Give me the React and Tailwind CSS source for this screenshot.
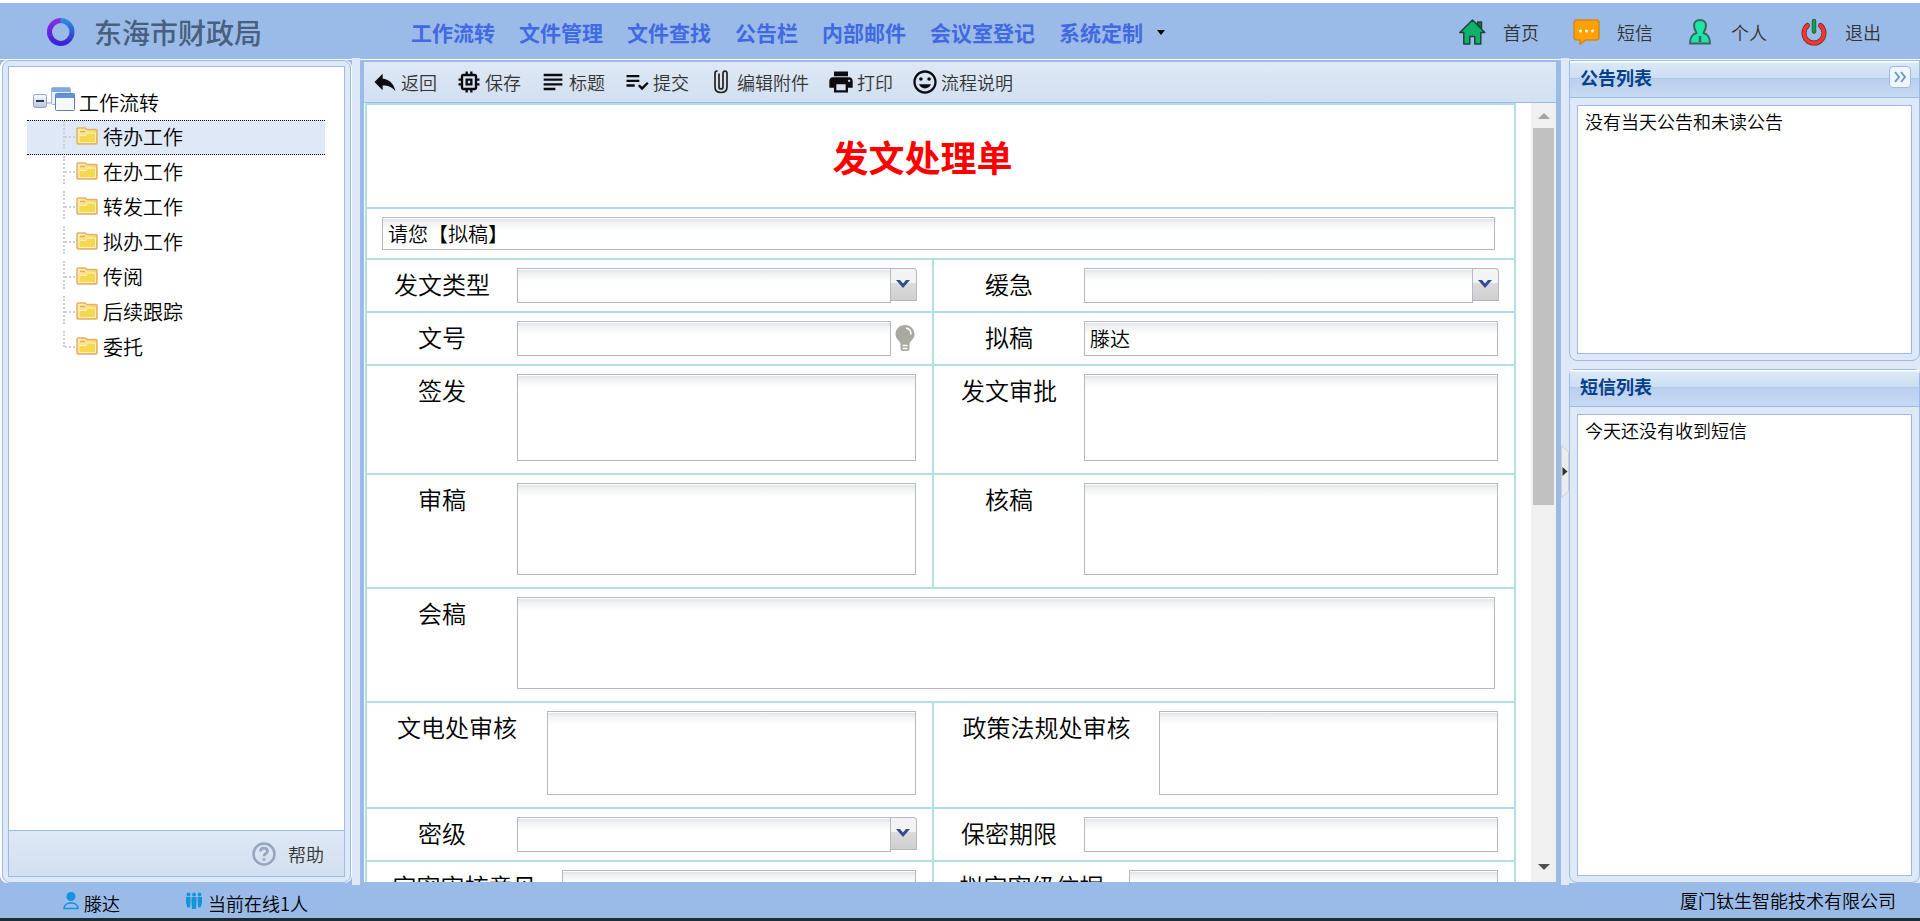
import { useState } from 'react';
import {
  MdReply,
  MdMemory,
  MdSubject,
  MdPlaylistAddCheck,
  MdPrint,
  MdInsertEmoticon,
} from 'react-icons/md';

const menuItems = ['工作流转', '文件管理', '文件查找', '公告栏', '内部邮件', '会议室登记', '系统定制'];

const treeItems = ['待办工作', '在办工作', '转发工作', '拟办工作', '传阅', '后续跟踪', '委托'];

const Logo = () => (
  <svg className="w-8 h-8" viewBox="0 0 32 32" fill="none" strokeWidth="5">
    <defs>
      <linearGradient id="ringLeft" x1="0" y1="0" x2="0" y2="1">
        <stop offset="0" stopColor="#8a2be2" />
        <stop offset="1" stopColor="#3b22d8" />
      </linearGradient>
      <linearGradient id="ringRight" x1="0" y1="0" x2="0" y2="1">
        <stop offset="0" stopColor="#2b8be0" />
        <stop offset="1" stopColor="#3a22d6" />
      </linearGradient>
    </defs>
    <path d="M15 4.500a11.500 11.500 0 0 0 0 23" stroke="url(#ringLeft)" />
    <path d="M14.500 4.500a11.500 11.500 0 0 1 0 23" stroke="url(#ringRight)" />
  </svg>
);

const HomeIcon = () => (
  <svg className="w-7 h-7" viewBox="0 0 28 28" stroke="#23443c" strokeWidth="1.5" strokeLinejoin="round">
    <path d="M18.500 4h4v6l-4-3z" fill="#0a7a4c" />
    <path d="M13.500 2 .8 14.500h4V26h6v-7.500h5V26h6V14.500h4z" fill="#0db26b" />
  </svg>
);

const ChatIcon = () => (
  <svg className="w-7 h-7" viewBox="0 0 28 28">
    <path
      d="M4 2h19q3 0 3 3v14q0 3-3 3H13l-6 4v-4H4q-3 0-3-3V5q0-3 3-3z"
      fill="#ffa200"
      stroke="#cf8a1c"
      strokeWidth="1.5"
    />
    <g fill="#fff">
      <circle cx="7.500" cy="13" r="1.500" />
      <circle cx="13.500" cy="13" r="1.500" />
      <circle cx="19.500" cy="13" r="1.500" />
    </g>
  </svg>
);

const PersonIcon = () => (
  <svg className="w-7 h-7" viewBox="0 0 28 28" stroke="#3a6664" strokeWidth="2" strokeLinejoin="round">
    <path
      d="M13 2c3.500 0 6 2.200 6 5.500 0 3-1.500 5.500-2.500 7.500 4.500 1.500 6.500 4 6.500 10.500H3C3 19 5 16.500 9.500 15 8.500 13 7 10.500 7 7.500 7 4.200 9.500 2 13 2z"
      fill="#1ce6a4"
    />
    <path d="M13 18v6" strokeWidth="2.5" />
  </svg>
);

const PowerIcon = () => (
  <svg className="w-7 h-7" viewBox="0 0 28 28" fill="none" strokeLinecap="round">
    <path d="M6.500 7.500a10 10 0 1 0 13 0" stroke="#6b2a30" strokeWidth="5" />
    <path d="M6.500 7.500a10 10 0 1 0 13 0" stroke="#f5352e" strokeWidth="3.5" />
    <path d="M13 3v10.500" stroke="#1e6b3c" strokeWidth="4.5" />
    <path d="M13 3v10" stroke="#12a04c" strokeWidth="2.5" />
  </svg>
);

const ClipIcon = () => (
  <svg className="w-6 h-6" viewBox="0 0 24 24" fill="none" stroke="#222" strokeWidth="1.700" strokeLinecap="round">
    <path d="M8 1c-1.500 0-2 1-2 2.500V17c0 4 2.500 5.500 6 5.500s6-1.500 6-5.500V3.500C18 2 17.500 1 16 1s-2 1-2 2.500V17c0 1.500-.5 2-2 2s-2-.5-2-2V4" />
  </svg>
);

const FolderIcon = () => (
  <svg className="w-[22px] h-[18px] shrink-0" viewBox="0 0 22 18">
    <defs>
      <linearGradient id="folder" x1="0" y1="0" x2="1" y2="1">
        <stop offset="0" stopColor="#fff3c4" />
        <stop offset="1" stopColor="#eec325" />
      </linearGradient>
    </defs>
    <path d="M1 2q0-1 1-1h7l2 1.500h9q1 0 1 1V16q0 1-1 1H2q-1 0-1-1z" fill="url(#folder)" stroke="#e3b068" strokeWidth="1.5" />
    <path d="M3 8.500h7l1.500-2.500h8v9.500H3z" fill="#f6d850" stroke="#fdf1c0" />
    <path d="M4 4.500h5" stroke="#e2ab53" strokeWidth="1.5" />
  </svg>
);

const WindowsIcon = () => (
  <svg className="w-6 h-6" viewBox="0 0 24 24">
    <rect x=".5" y=".5" width="19" height="17" rx="1" fill="#e9f0fa" stroke="#9db7dc" />
    <path d="M1 1h18v4H1z" fill="#7fa8dc" />
    <rect x="4.500" y="6.500" width="19" height="17" rx="1" fill="#f5f9ff" stroke="#5c81b5" />
    <path d="M5 7h18v4H5z" fill="#5f93d6" />
  </svg>
);

const MinusIcon = () => (
  <svg className="w-3.5 h-3.5" viewBox="0 0 14 14">
    <defs>
      <linearGradient id="minus" x1="0" y1="0" x2="0" y2="1">
        <stop offset="0" stopColor="#fff" />
        <stop offset="1" stopColor="#b4c3d8" />
      </linearGradient>
    </defs>
    <rect x=".5" y=".5" width="13" height="13" rx="2" fill="url(#minus)" stroke="#8fa3bf" />
    <path d="M3 7h8" stroke="#1d3a66" strokeWidth="2" />
  </svg>
);

const HelpIcon = () => (
  <svg className="w-6 h-6" viewBox="0 0 24 24" fill="none" stroke="#97a5bd">
    <circle cx="12" cy="12" r="10.500" strokeWidth="2.5" />
    <path d="M8.500 9.500c0-4.500 7-4.500 7-.3 0 2.500-3.500 2.300-3.500 5" strokeWidth="2.8" />
    <path d="M12 16.200v2.600" strokeWidth="2.8" />
  </svg>
);

const BulbIcon = () => (
  <svg className="w-[22px] h-[28px]" viewBox="0 0 22 28">
    <path
      d="M11 0c5.500 0 9.500 4 9.500 9.500 0 4.500-4.500 6-5 9.500v4.500q0 2.500-2 2.500h-5q-2 0-2-2.500V19c-.5-3.500-5-5-5-9.500C1.500 4 5.500 0 11 0z"
      fill="#aaa9a0"
    />
    <path d="M12 3c3 .5 5 3 5 6.500" fill="none" stroke="#fff" strokeWidth="1.5" />
    <path d="M8.500 20.500h5M8.500 23.500h5" stroke="#fff" strokeWidth="1.5" />
  </svg>
);

const UserIcon = () => (
  <svg className="w-[18px] h-[18px]" viewBox="0 0 18 18" fill="#1296db">
    <circle cx="9" cy="4.500" r="4.500" />
    <path d="M2 16.500c0-7.500 14-7.500 14 0z" fill="none" stroke="#1296db" strokeWidth="1.600" />
  </svg>
);

const PeopleIcon = () => (
  <svg className="w-[18px] h-[18px]" viewBox="0 0 18 18" fill="#1296db">
    <circle cx="3.500" cy="2.500" r="1.900" />
    <circle cx="9" cy="2.500" r="2" />
    <circle cx="14.500" cy="2.500" r="1.900" />
    <path d="M1 5h4.500v6L5 15.500H2.500L1 11zM6.500 5h5v6L11 17H7l-.5-6zM12.500 5H17v6l-1.500 4.500H13z" />
  </svg>
);

const quickLinks = [
  { label: '首页', icon: HomeIcon },
  { label: '短信', icon: ChatIcon },
  { label: '个人', icon: PersonIcon },
  { label: '退出', icon: PowerIcon },
];

const tools = [
  { label: '返回', icon: MdReply },
  { label: '保存', icon: MdMemory },
  { label: '标题', icon: MdSubject },
  { label: '提交', icon: MdPlaylistAddCheck },
  { label: '编辑附件', icon: ClipIcon },
  { label: '打印', icon: MdPrint },
  { label: '流程说明', icon: MdInsertEmoticon },
];

const fieldClass =
  'block min-w-0 flex-1 border border-[#b5b8c8] px-[5px] text-xl outline-none resize-none rounded-none ' +
  'bg-white bg-[linear-gradient(to_bottom,#ffffff_1px,#e1e5e5_1px,#f1f4f4_5px,#ffffff_13px)]';

function Combo({ id }) {
  const open = (e) => e.currentTarget.previousSibling.showPicker();
  return (
    <div className="flex flex-1 items-start">
      <select id={id} className={`${fieldClass} h-[35px] appearance-none`} />
      <button
        type="button"
        aria-label="展开"
        onClick={open}
        className="-mr-px h-[33px] w-[26px] rounded-tr border border-l-0 border-[#b5b8c8] bg-[linear-gradient(to_bottom,#f3f3f3_45%,#dcdcdc_45%,#cfcfcf)] flex items-center justify-center"
      >
        <svg className="mr-0.5 mb-0.5 w-3.5 h-2.5" viewBox="0 0 14 10">
          <path d="M0 1h4l3 3.500L10 1h4L7 9z" fill="#2d4f8e" />
        </svg>
      </button>
    </div>
  );
}

// One label + control pair of the form
function Field({ id, label, labelWidth = 'w-[150px]', type = 'text', height = 'h-[35px]', value = '', wide }) {
  return (
    <div className={`flex pt-2 ${wide ? 'pr-[19px]' : 'pr-4'} ${type === 'area' ? 'pb-3' : 'pb-2'}`}>
      <label htmlFor={id} className={`${labelWidth} shrink-0 text-center text-2xl leading-8`}>
        {label}
      </label>
      {type === 'area' && <textarea id={id} className={`${fieldClass} ${height}`} />}
      {type === 'text' && <input id={id} defaultValue={value} className={`${fieldClass} ${height}`} />}
      {type === 'select' && <Combo id={id} />}
      {type === 'number' && (
        <>
          <input id={id} className={`${fieldClass} ${height}`} />
          <button type="button" aria-label="生成文号" className="w-[25px] h-[35px] flex items-center justify-end">
            <BulbIcon />
          </button>
        </>
      )}
    </div>
  );
}

function FormRow({ children }) {
  return (
    <div className="grid grid-cols-[567fr_580fr] border-b-2 border-[#b0e0e6] [&>*:first-child]:border-r-2 [&>*:first-child]:border-[#b0e0e6]">
      {children}
    </div>
  );
}

function Splitter({ children }) {
  return (
    <div className="relative w-2 -my-0.5 shrink-0 bg-[#dfe8f6]">{children}</div>
  );
}

function Panel({ title, children, className, collapsible }) {
  return (
    <section className={`flex flex-col rounded-b-lg border border-[#99bbe8] bg-[#dfe8f6] ${className}`}>
      <div className="flex h-[37px] shrink-0 items-center justify-between border-b border-[#99bbe8] bg-[linear-gradient(to_bottom,#ffffff_1px,#dbe7f5_2px,#cddef3_46%,#abc7ec_47%,#bad0ee_52%,#c8daf2)] px-2.5 pb-1">
        <h2 className="text-lg leading-8 font-bold text-[#04408c]">{title}</h2>
        {collapsible && (
          <button
            type="button"
            aria-label="折叠"
            className="-mr-0.5 flex h-[22px] w-[22px] items-center justify-center rounded border border-[#99bbe8] bg-[#eff6ff]"
          >
            <svg className="w-3.5 h-3.5" viewBox="0 0 14 14" fill="none" stroke="#6d98c8" strokeWidth="2">
              <path d="m2 2 4 5-4 5M8 2l4 5-4 5" />
            </svg>
          </button>
        )}
      </div>
      <div className="mx-[7px] mt-[7px] mb-1.5 flex-1 border border-[#99bbe8] bg-white px-[7px] pt-[3px] text-lg leading-6">
        {children}
      </div>
    </section>
  );
}

export default function App() {
  const [selected, setSelected] = useState('待办工作');

  return (
    <div className="flex h-screen flex-col overflow-hidden border-b-[3px] border-[#1c2e33] bg-[#9abbe8] font-['Noto_Sans_CJK_SC','Microsoft_YaHei',sans-serif] font-[350] text-black">
      {/* Header */}
      <header className="flex h-[59px] shrink-0 items-center border-t-[3px] border-white pl-[46px] pr-[39px] pt-0.5">
        <Logo />
        <h1 className="ml-4 w-[317px] text-[28px] leading-8 font-medium text-[#47607f]">东海市财政局</h1>
        <nav className="flex items-center gap-6">
          {menuItems.map((item) => (
            <a key={item} href="#" className="whitespace-nowrap text-[21px] leading-8 font-bold text-[#4169e1]">
              {item}
            </a>
          ))}
          <span className="-ml-2.5 border-x-4 border-t-[5px] border-x-transparent border-t-black" />
        </nav>
        <div className="ml-auto flex items-center gap-[34px]">
          {quickLinks.map(({ label, icon: Icon }) => (
            <a key={label} href="#" className="flex items-center gap-4 whitespace-nowrap text-lg text-[#333]">
              <Icon />
              {label}
            </a>
          ))}
        </div>
      </header>

      <div className="flex min-h-0 flex-1 border-t border-white">
        {/* Left tree */}
        <aside className="flex w-[352px] shrink-0 flex-col rounded-lg border-x border-white bg-white pl-px">
          <div className="flex flex-1 flex-col rounded-lg border border-[#99bbe8] bg-[#dfe8f6] p-[5px]">
            <div className="flex-1 border border-[#99bbe8] bg-white pt-[18px] pl-[18px] pr-[19px]">
              <div className="flex h-[35px] items-center pl-1.5 text-xl">
                <button type="button" aria-label="收起" className="pb-1">
                  <MinusIcon />
                </button>
                <span className="w-1 border-t-2 border-dotted border-[#d0d0d0]" />
                <div className="pb-2">
                  <WindowsIcon />
                </div>
                <span className="ml-1">工作流转</span>
              </div>
              <ul>
                {treeItems.map((item, i) => (
                  <li key={item}>
                    <button
                      type="button"
                      onClick={() => setSelected(item)}
                      className={`flex h-[35px] w-full items-center border-y border-dotted pl-9 pb-0.5 text-xl leading-8 ${
                        selected === item ? 'border-black bg-[#dfe8f6]' : 'border-transparent'
                      }`}
                    >
                      <span
                        className={`w-px self-start border-l-2 border-dotted border-[#d0d0d0] ${
                          i === treeItems.length - 1 ? 'h-4' : 'h-7'
                        }`}
                      />
                      <span className="w-2.5 border-t-2 border-dotted border-[#d0d0d0]" />
                      <span className="ml-px pb-0.5">
                        <FolderIcon />
                      </span>
                      <span className="ml-[5px]">{item}</span>
                    </button>
                  </li>
                ))}
              </ul>
            </div>
            <div className="flex h-[46px] items-center justify-end border border-t-0 border-[#99bbe8] bg-linear-to-b from-[#dfe8f5] to-[#d2e0f1] pr-5">
              <a href="#" className="flex items-center gap-3 text-lg text-[#333]">
                <HelpIcon />
                帮助
              </a>
            </div>
          </div>
        </aside>

        <Splitter />

        {/* Document form */}
        <main className="mt-0.5 ml-0.5 mr-[3px] flex min-w-0 flex-1 flex-col border-x-2 border-b border-[#99bbe8]">
          <div className="flex h-[41px] shrink-0 items-center gap-5 border-b border-[#99bbe8] bg-linear-to-b from-[#dfe8f5] to-[#d2e0f1] pl-[9px]">
            {tools.map(({ label, icon: Icon }) => (
              <button
                key={label}
                type="button"
                className="flex items-center gap-1 whitespace-nowrap text-lg text-[#333]"
              >
                <span className="flex w-6 justify-center">
                  <Icon className="h-7 w-7 shrink-0 text-[#0c0c10]" />
                </span>
                {label}
              </button>
            ))}
          </div>

          <div className="flex min-h-0 flex-1 overflow-hidden bg-white">
            <form className="ml-px mr-[15px] h-max flex-1 border-2 border-[#b0e0e6]">
              <h2 className="border-b-2 border-[#b0e0e6] pr-9 text-center text-4xl leading-[102px] font-bold text-[#ff0000]">
                发文处理单
              </h2>
              <div className="flex border-b-2 border-[#b0e0e6] py-2 pl-[15px] pr-[19px]">
                <input aria-label="当前步骤" defaultValue="请您【拟稿】" className={`${fieldClass} h-[33px]`} />
              </div>
              <FormRow>
                <Field id="type" label="发文类型" type="select" />
                <Field id="urgency" label="缓急" type="select" />
              </FormRow>
              <FormRow>
                <Field id="number" label="文号" type="number" />
                <Field id="drafter" label="拟稿" value="滕达" />
              </FormRow>
              <FormRow>
                <Field id="issue" label="签发" type="area" height="h-[87px]" />
                <Field id="approve" label="发文审批" type="area" height="h-[87px]" />
              </FormRow>
              <FormRow>
                <Field id="review" label="审稿" type="area" height="h-[92px]" />
                <Field id="check" label="核稿" type="area" height="h-[92px]" />
              </FormRow>
              <div className="border-b-2 border-[#b0e0e6]">
                <Field id="joint" label="会稿" type="area" height="h-[92px]" wide />
              </div>
              <FormRow>
                <Field id="office" label="文电处审核" labelWidth="w-[180px]" type="area" height="h-[84px]" />
                <Field id="policy" label="政策法规处审核" labelWidth="w-[225px]" type="area" height="h-[84px]" />
              </FormRow>
              <FormRow>
                <Field id="secret" label="密级" type="select" />
                <Field id="period" label="保密期限" />
              </FormRow>
              <FormRow>
                <Field id="opinion" label="定密审核意见" labelWidth="w-[195px]" />
                <Field id="basis" label="拟定密级依据" labelWidth="w-[195px]" />
              </FormRow>
            </form>

            {/* Scrollbar */}
            <div className="flex w-[25px] shrink-0 flex-col items-center bg-[#f0f0f0]">
              <span className="mt-2.5 mb-[9px] border-x-[6px] border-b-[6px] border-x-transparent border-b-[#a3a3a3]" />
              <span className="h-[377px] w-[21px] bg-[#c1c1c1]" />
              <span className="mt-auto mb-3 border-x-[6px] border-t-[6px] border-x-transparent border-t-[#505050]" />
            </div>
          </div>
        </main>

        <Splitter>
          <button type="button" aria-label="收起右侧" className="absolute top-[387px] left-0 h-[53px] w-2">
            <svg className="h-full w-full" viewBox="0 0 8 53">
              <path d="M.5.5 7.500 7v39l-7 6.500z" fill="#ececec" stroke="#d0d0d0" />
              <path d="M1.500 22v9l5-4.500z" fill="#333" />
            </svg>
          </button>
        </Splitter>

        {/* Right column */}
        <div className="flex w-[351px] shrink-0 flex-col bg-[#dfe8f6]">
          <Panel title="公告列表" className="h-[301px]" collapsible>
            没有当天公告和未读公告
          </Panel>
          <Panel title="短信列表" className="mt-2 flex-1 rounded-t-md">
            今天还没有收到短信
          </Panel>
        </div>
      </div>

      {/* Status bar */}
      <footer className="flex h-[35px] shrink-0 items-center pl-[62px] pr-6 pb-0.5 text-lg border-t border-[#99bbe8]">
        <div className="flex w-[123px] items-center gap-1 pt-1.5">
          <span className="pb-1">
            <UserIcon />
          </span>
          滕达
        </div>
        <div className="flex items-center gap-[5px] pt-1.5">
          <span className="pb-1">
            <PeopleIcon />
          </span>
          当前在线1人
        </div>
        <span className="ml-auto">厦门钛生智能技术有限公司</span>
      </footer>
    </div>
  );
}
